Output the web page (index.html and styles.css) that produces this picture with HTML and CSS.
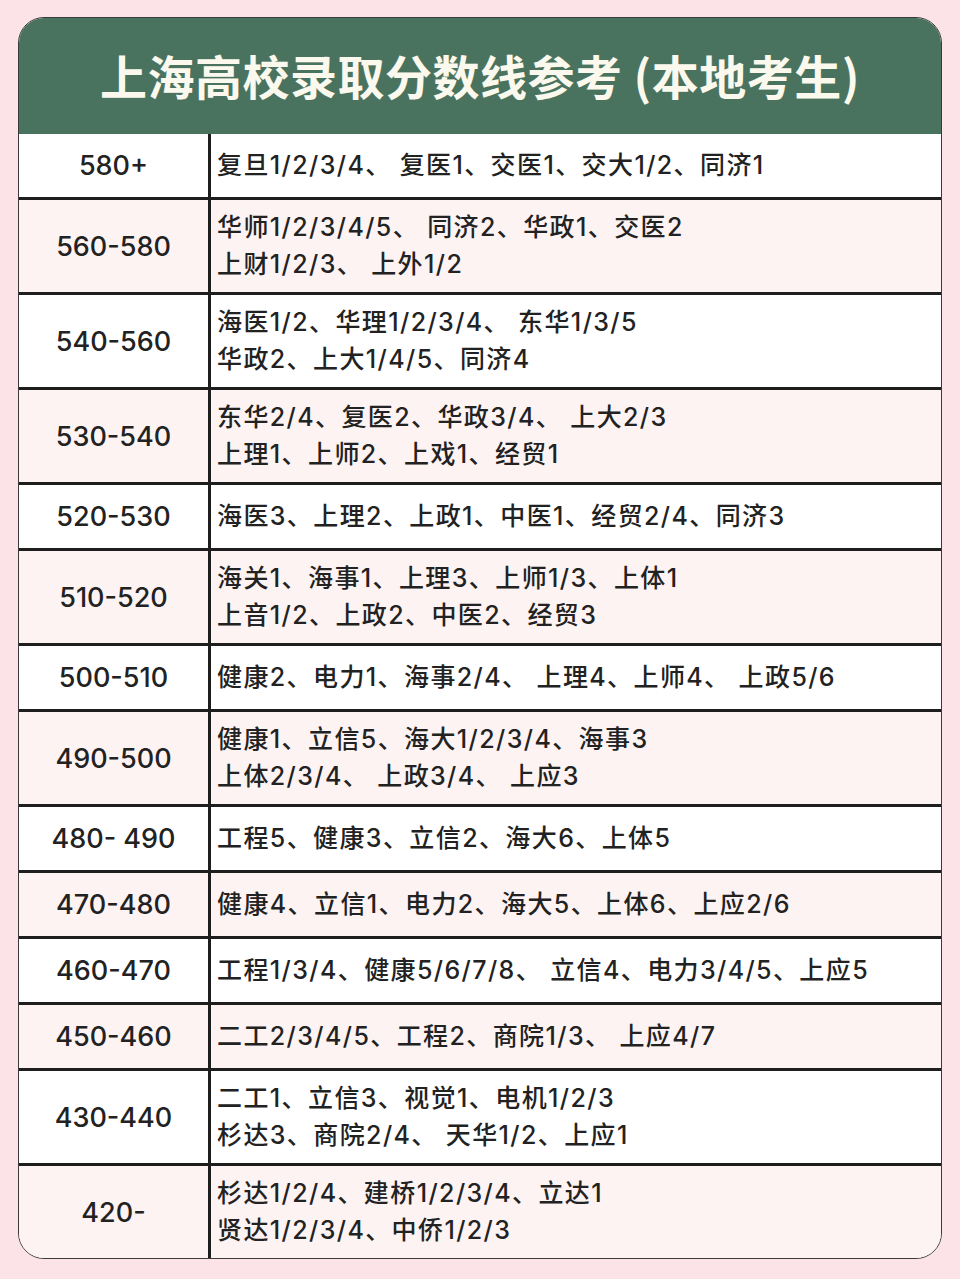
FILE: index.html
```html
<!DOCTYPE html>
<html lang="zh-CN">
<head>
<meta charset="utf-8">
<title>上海高校录取分数线参考</title>
<link rel="stylesheet" href="styles.css">
</head>
<body>
<div class="card">
  <div class="header">上海高校录取分数线参考 (本地考生)</div>
  <div class="table">
    <div class="row"><div class="score">580+</div><div class="schools">复旦1/2/3/4、 复医1、交医1、交大1/2、同济1</div></div>
    <div class="row alt"><div class="score">560-580</div><div class="schools">华师1/2/3/4/5、 同济2、华政1、交医2<br>上财1/2/3、 上外1/2</div></div>
    <div class="row"><div class="score">540-560</div><div class="schools">海医1/2、华理1/2/3/4、 东华1/3/5<br>华政2、上大1/4/5、同济4</div></div>
    <div class="row alt"><div class="score">530-540</div><div class="schools">东华2/4、复医2、华政3/4、 上大2/3<br>上理1、上师2、上戏1、经贸1</div></div>
    <div class="row"><div class="score">520-530</div><div class="schools">海医3、上理2、上政1、中医1、经贸2/4、同济3</div></div>
    <div class="row alt"><div class="score">510-520</div><div class="schools">海关1、海事1、上理3、上师1/3、上体1<br>上音1/2、上政2、中医2、经贸3</div></div>
    <div class="row"><div class="score">500-510</div><div class="schools">健康2、电力1、海事2/4、 上理4、上师4、 上政5/6</div></div>
    <div class="row alt"><div class="score">490-500</div><div class="schools">健康1、立信5、海大1/2/3/4、海事3<br>上体2/3/4、 上政3/4、 上应3</div></div>
    <div class="row"><div class="score">480- 490</div><div class="schools">工程5、健康3、立信2、海大6、上体5</div></div>
    <div class="row alt"><div class="score">470-480</div><div class="schools">健康4、立信1、电力2、海大5、上体6、上应2/6</div></div>
    <div class="row"><div class="score">460-470</div><div class="schools">工程1/3/4、健康5/6/7/8、 立信4、电力3/4/5、上应5</div></div>
    <div class="row alt"><div class="score">450-460</div><div class="schools">二工2/3/4/5、工程2、商院1/3、 上应4/7</div></div>
    <div class="row"><div class="score">430-440</div><div class="schools">二工1、立信3、视觉1、电机1/2/3<br>杉达3、商院2/4、 天华1/2、上应1</div></div>
    <div class="row alt"><div class="score">420-</div><div class="schools">杉达1/2/4、建桥1/2/3/4、立达1<br>贤达1/2/3/4、中侨1/2/3</div></div>
  </div>
</div>
</body>
</html>
```
FILE: styles.css
```css
html, body {
  margin: 0;
  padding: 0;
}
body {
  background: #fce3e7;
  font-family: "Inter", "Noto Sans CJK SC", "Noto Sans", sans-serif;
  color: #222;
  padding: 17px 18px 0 18px;
}
.card {
  width: 922px;
  border: 1px solid #3a3a3a;
  border-radius: 26px;
  overflow: hidden;
  background: #fff;
}
.header {
  height: 116px;
  background: #4a735f;
  color: #fbf8ee;
  font-family: "Noto Sans CJK SC", "Inter", sans-serif;
  font-size: 47px;
  font-weight: 700;
  display: flex;
  align-items: center;
  justify-content: center;
  letter-spacing: 0.5px;
  padding-bottom: 4px;
  box-sizing: border-box;
}
.table {
  display: flex;
  flex-direction: column;
}
.row {
  display: grid;
  grid-template-columns: 192px 1fr;
  min-height: 63px;
  border-top: 3px solid #1e1e1e;
  background: #ffffff;
}
.row:first-child {
  border-top: none;
}
.row.alt {
  background: #fdf3f3;
}
.score {
  display: flex;
  align-items: center;
  justify-content: center;
  font-size: 27px;
  font-weight: 500;
  border-right: 3px solid #1e1e1e;
}
.schools {
  display: flex;
  flex-direction: column;
  justify-content: center;
  padding: 9px 6px;
  font-size: 25px;
  font-weight: 500;
  line-height: 37px;
  letter-spacing: 1.4px;
}
```
